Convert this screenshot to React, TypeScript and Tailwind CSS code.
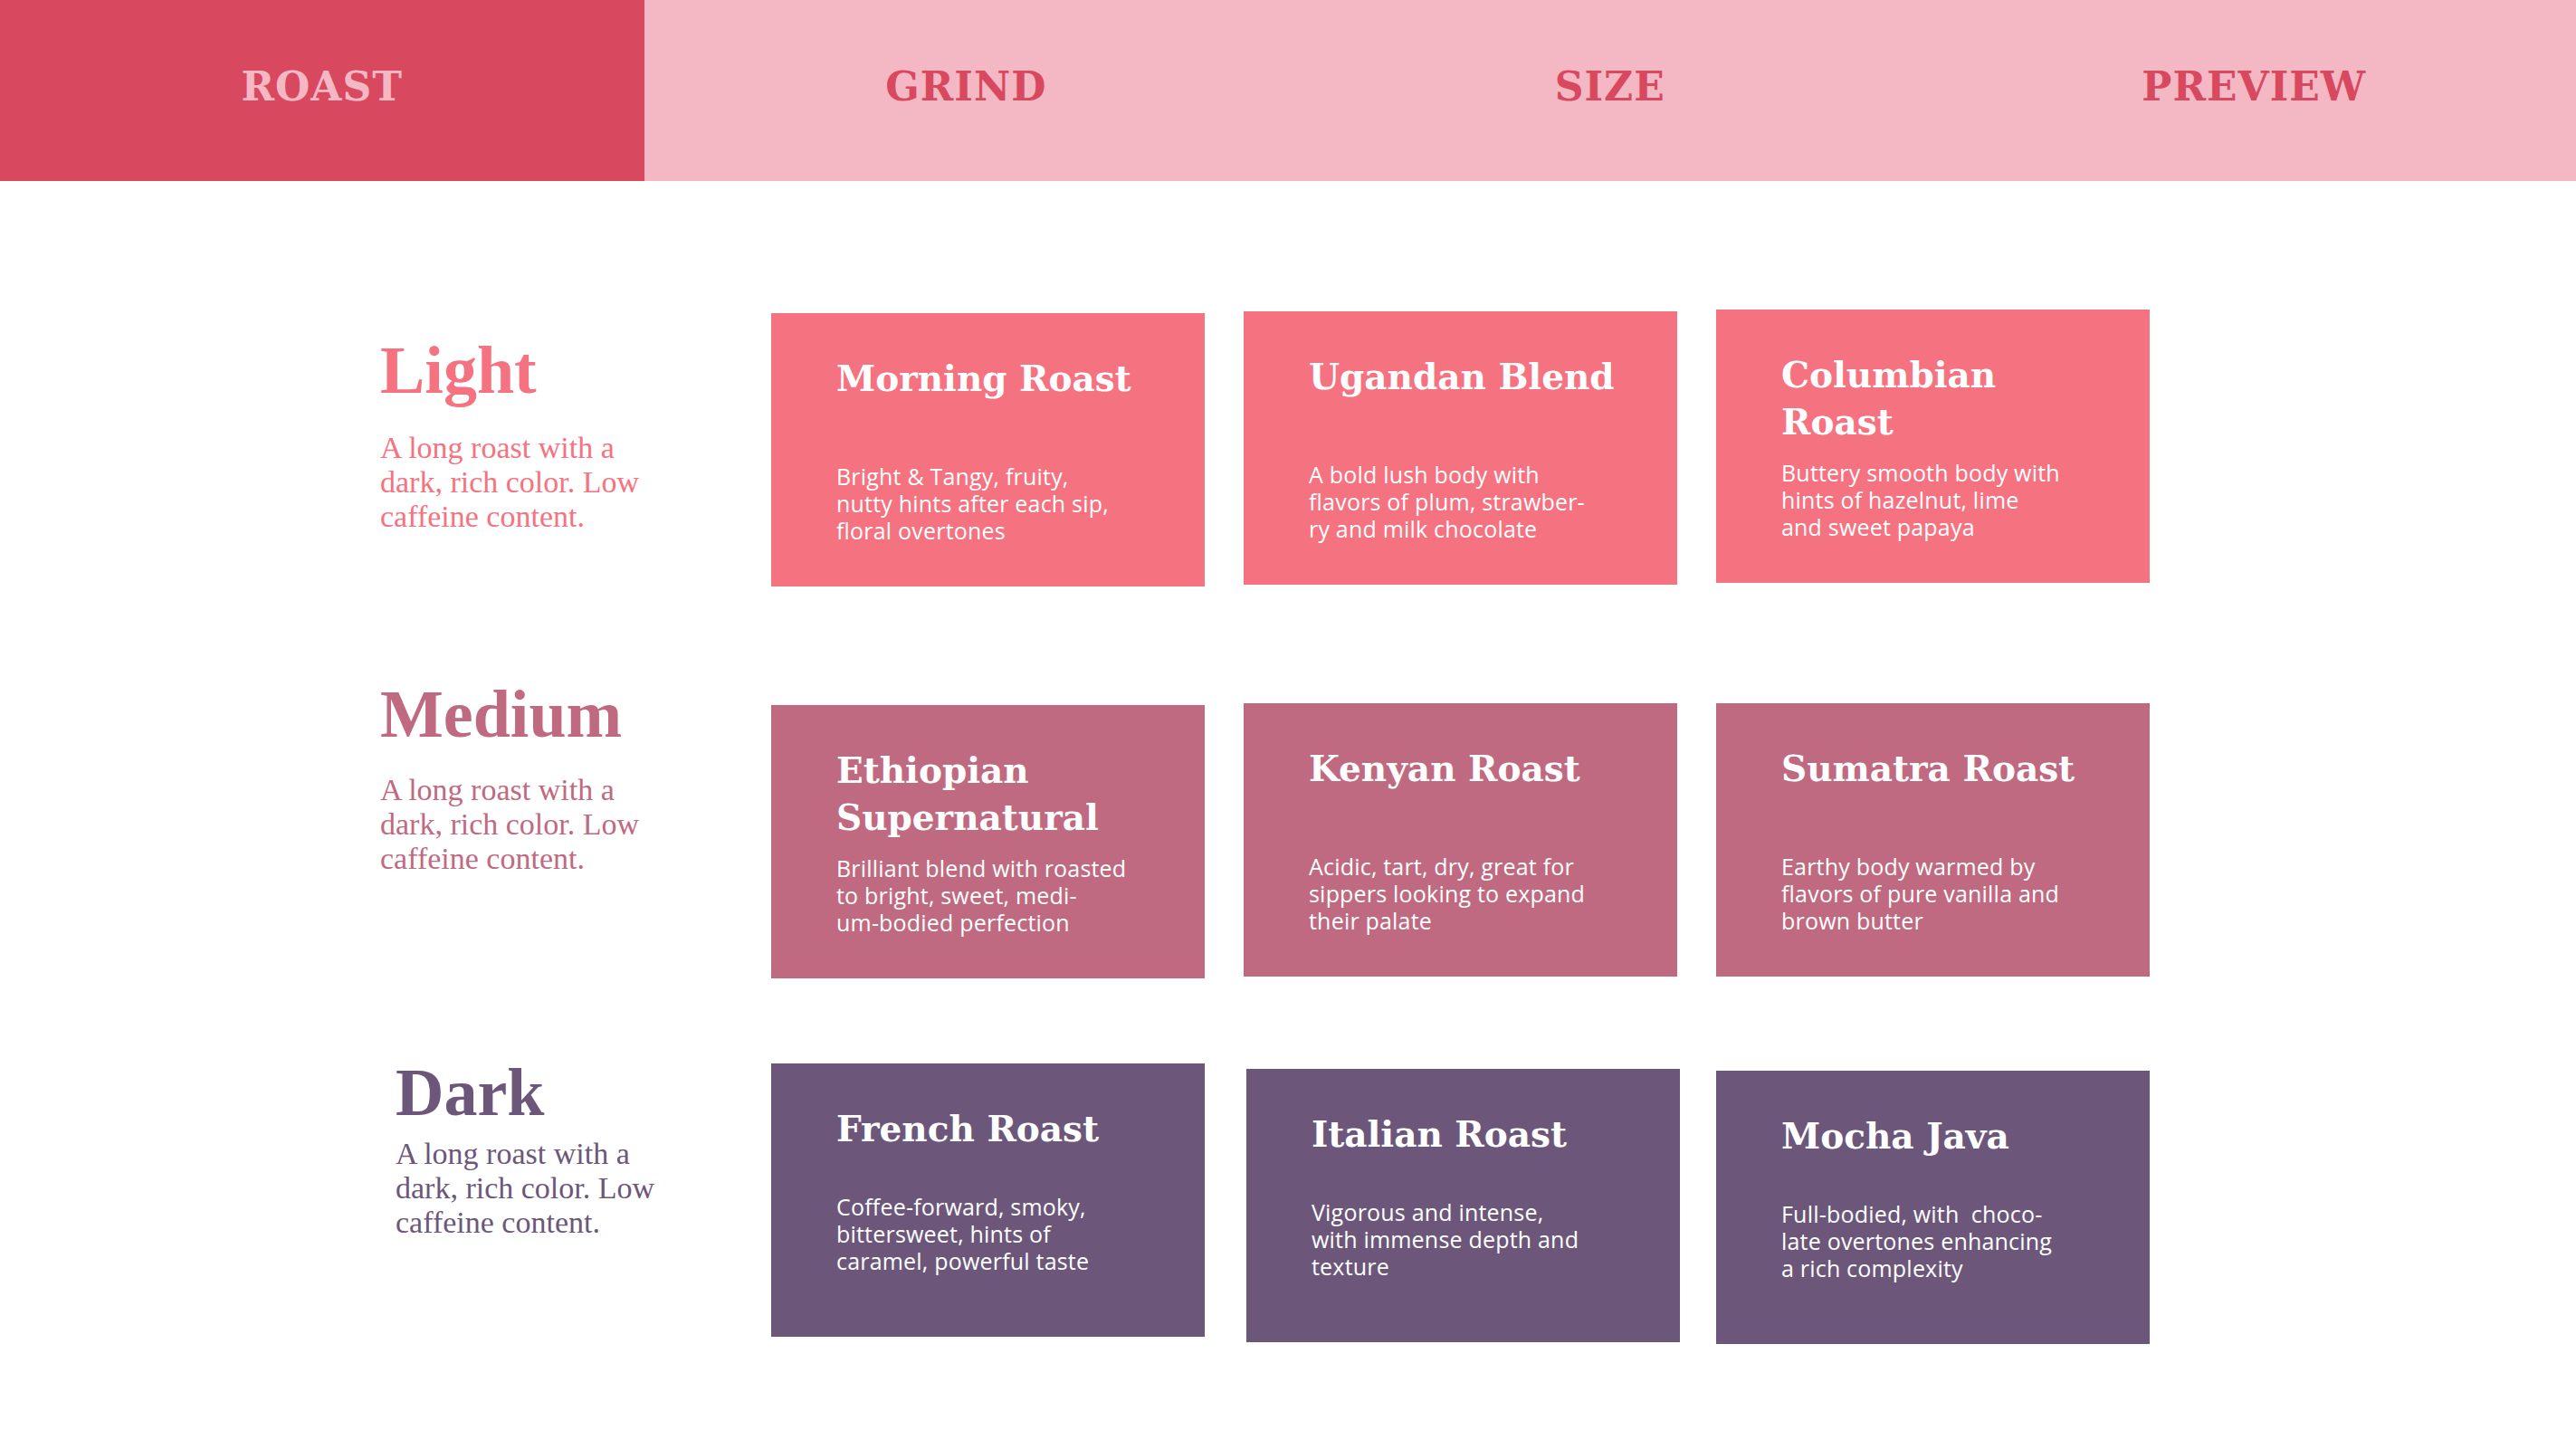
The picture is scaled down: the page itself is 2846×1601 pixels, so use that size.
import React from 'react';

type Tab = { id: string; label: string };

const tabs: Tab[] = [
  { id: 'roast', label: 'ROAST' },
  { id: 'grind', label: 'GRIND' },
  { id: 'size', label: 'SIZE' },
  { id: 'preview', label: 'PREVIEW' },
];

interface Blend {
  name: string[];
  notes: string[];
  offset: string;
}

interface RoastRow {
  id: string;
  title: string;
  rowClass: string;
  labelClass: string;
  descClass: string;
  textColor: string;
  cardColor: string;
  titleBlock: string;
  blends: Blend[];
}

const rows: RoastRow[] = [
  {
    id: 'light',
    title: 'Light',
    rowClass: 'mt-0',
    labelClass: 'mt-[30px] pl-0',
    descClass: 'mt-[30px]',
    textColor: 'text-[#f57381]',
    cardColor: 'bg-[#f57280]',
    titleBlock: 'h-[119px]',
    blends: [
      {
        name: ['Morning Roast'],
        notes: ['Bright & Tangy, fruity,', 'nutty hints after each sip,', 'floral overtones'],
        offset: 'mt-[4px]',
      },
      {
        name: ['Ugandan Blend'],
        notes: ['A bold lush body with', 'flavors of plum, strawber-', 'ry and milk chocolate'],
        offset: 'mt-[2px]',
      },
      {
        name: ['Columbian', 'Roast'],
        notes: ['Buttery smooth body with', 'hints of hazelnut, lime', 'and sweet papaya'],
        offset: 'mt-0',
      },
    ],
  },
  {
    id: 'medium',
    title: 'Medium',
    rowClass: 'mt-[129px]',
    labelClass: '-mt-[25px] pl-0',
    descClass: 'mt-[28px]',
    textColor: 'text-[#c06a81]',
    cardColor: 'bg-[#c06a81]',
    titleBlock: 'h-[119px]',
    blends: [
      {
        name: ['Ethiopian', 'Supernatural'],
        notes: ['Brilliant blend with roasted', 'to bright, sweet, medi-', 'um-bodied perfection'],
        offset: 'mt-[2px]',
      },
      {
        name: ['Kenyan Roast'],
        notes: ['Acidic, tart, dry, great for', 'sippers looking to expand', 'their palate'],
        offset: 'mt-0',
      },
      {
        name: ['Sumatra Roast'],
        notes: ['Earthy body warmed by', 'flavors of pure vanilla and', 'brown butter'],
        offset: 'mt-0',
      },
    ],
  },
  {
    id: 'dark',
    title: 'Dark',
    rowClass: 'mt-[94px]',
    labelClass: '-mt-[5px] pl-[17px]',
    descClass: 'mt-[12px]',
    textColor: 'text-[#6c577b]',
    cardColor: 'bg-[#6c577b]',
    titleBlock: 'h-[97px]',
    blends: [
      {
        name: ['French Roast'],
        notes: ['Coffee-forward, smoky,', 'bittersweet, hints of', 'caramel, powerful taste'],
        offset: 'mt-0',
      },
      {
        name: ['Italian Roast'],
        notes: ['Vigorous and intense,', 'with immense depth and', 'texture'],
        offset: 'mt-[6px] ml-[3px]',
      },
      {
        name: ['Mocha Java'],
        notes: ['Full-bodied, with\u00a0 choco-', 'late overtones enhancing', 'a rich complexity'],
        offset: 'mt-[8px] -ml-[3px]',
      },
    ],
  },
];

const BlendCard: React.FC<{ blend: Blend; row: RoastRow }> = ({ blend, row }) => (
  <div className={`${blend.offset} ${row.cardColor} flex h-[302px] w-[479px] shrink-0 flex-col pl-[72px] pt-[46px] text-white`}>
    <div className={row.titleBlock}>
      {blend.name.map((line) => (
        <div
          key={line}
          className="whitespace-nowrap font-['DejaVu_Serif',serif] text-[39px] font-bold leading-[52px]"
        >
          {line}
        </div>
      ))}
    </div>
    <div className="font-['Open_Sans',sans-serif] text-[25px] leading-[30px] tracking-[0.2px]">
      {blend.notes.map((line) => (
        <div key={line} className="whitespace-nowrap">
          {line}
        </div>
      ))}
    </div>
  </div>
);

export default function App() {
  return (
    <div className="min-h-screen w-full bg-white">
      {/* Step tabs */}
      <header className="grid h-[200px] grid-cols-4">
        {tabs.map((tab, i) => (
          <div
            key={tab.id}
            className={
              i === 0
                ? 'flex items-center justify-center bg-[#d8485e] pb-[8px] text-[#f4b8c4]'
                : 'flex items-center justify-center bg-[#f4b8c4] pb-[8px] text-[#d8485e]'
            }
          >
            <span className="font-['DejaVu_Serif',serif] text-[44px] font-bold tracking-[1px]">
              {tab.label}
            </span>
          </div>
        ))}
      </header>

      {/* Roast choices */}
      <main className="pb-[100px] pl-[420px] pt-[142px]">
        {rows.map((row) => (
          <section key={row.id} className={`${row.rowClass} flex items-start`}>
            <div className={`${row.labelClass} w-[432px] shrink-0 ${row.textColor}`}>
              <h2 className="font-['Liberation_Serif',serif] text-[74px] font-bold leading-[74px]">
                {row.title}
              </h2>
              <p className={`${row.descClass} font-['Liberation_Serif',serif] text-[34px] leading-[38px]`}>
                A long roast with a
                <br />
                dark, rich color. Low
                <br />
                caffeine content.
              </p>
            </div>
            <div className="flex items-start gap-[43px]">
              {row.blends.map((blend) => (
                <BlendCard key={blend.name.join(' ')} blend={blend} row={row} />
              ))}
            </div>
          </section>
        ))}
      </main>
    </div>
  );
}
